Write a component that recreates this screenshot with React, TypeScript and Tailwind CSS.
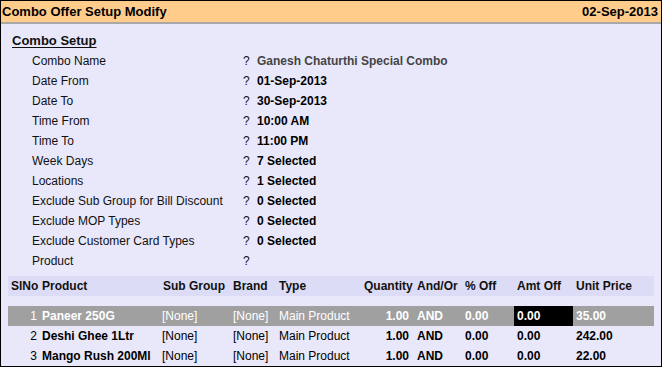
const fields: { label: string; value: string; muted?: boolean }[] = [
  { label: 'Combo Name', value: 'Ganesh Chaturthi Special Combo', muted: true },
  { label: 'Date From', value: '01-Sep-2013' },
  { label: 'Date To', value: '30-Sep-2013' },
  { label: 'Time From', value: '10:00 AM' },
  { label: 'Time To', value: '11:00 PM' },
  { label: 'Week Days', value: '7 Selected' },
  { label: 'Locations', value: '1 Selected' },
  { label: 'Exclude Sub Group for Bill Discount', value: '0 Selected' },
  { label: 'Exclude MOP Types', value: '0 Selected' },
  { label: 'Exclude Customer Card Types', value: '0 Selected' },
  { label: 'Product', value: '' },
]

const items = [
  { no: 1, product: 'Paneer 250G', price: '35.00' },
  { no: 2, product: 'Deshi Ghee 1Ltr', price: '242.00' },
  { no: 3, product: 'Mango Rush 200Ml', price: '22.00' },
]

const cols = 'grid grid-cols-[32px_120px_71px_46px_83px_52px_51px_51px_59px_83px]'

export default function App() {
  return (
    <div className="w-[662px] h-[367px] overflow-hidden border border-black bg-[#e8e8fa] text-[12px] text-[#111] font-['Liberation_Sans',Arial,sans-serif]">
      <div className="flex h-[23px] items-center justify-between border-b-2 border-[#a8a8a8] bg-[#ffcc8c] pl-[1px] pr-[3px] text-[13px] font-bold text-black">
        <span>Combo Offer Setup Modify</span>
        <span>02-Sep-2013</span>
      </div>

      <div className="pt-[7px]">
        <div className="flex h-[20px] items-center pl-[11px] text-[13px] font-bold underline underline-offset-2">
          Combo Setup
        </div>
        {fields.map((f) => (
          <div key={f.label} className="flex h-[20px] items-center whitespace-nowrap">
            <span className="w-[242px] shrink-0 pl-[31px]">{f.label}</span>
            <span className="w-[14px] shrink-0">?</span>
            <span className={f.muted ? 'font-bold text-[#444]' : 'font-bold text-black'}>{f.value}</span>
          </div>
        ))}

        <div className="mt-[5px] px-[7px]">
          <div className={`${cols} h-[20px] items-center bg-[#dcdcf6] font-bold whitespace-nowrap`}>
            <span className="pl-[3px]">SlNo</span>
            <span className="pl-[2px]">Product</span>
            <span className="pl-[3px]">Sub Group</span>
            <span className="pl-[2px]">Brand</span>
            <span className="pl-[2px]">Type</span>
            <span className="pl-[4px]">Quantity</span>
            <span className="pl-[5px]">And/Or</span>
            <span className="pl-[2px]">% Off</span>
            <span className="pl-[3px]">Amt Off</span>
            <span className="pl-[3px]">Unit Price</span>
          </div>

          <div className="mt-[10px]">
            {items.map((r, i) => {
              const sel = i === 0
              return (
                <div
                  key={r.no}
                  className={`${cols} h-[20px] items-center whitespace-nowrap ${sel ? 'bg-[#a0a0a0] text-white' : 'text-black'}`}
                >
                  <span className="pr-[3px] text-right">{r.no}</span>
                  <span className="pl-[2px] font-bold">{r.product}</span>
                  <span className="pl-[2px]">[None]</span>
                  <span className="pl-[2px]">[None]</span>
                  <span className="pl-[2px]">Main Product</span>
                  <span className="pr-[3px] text-right font-bold">1.00</span>
                  <span className="pl-[5px] font-bold">AND</span>
                  <span className="pl-[2px] font-bold">0.00</span>
                  <span className={`flex h-full items-center pl-[3px] font-bold ${sel ? 'bg-black' : ''}`}>0.00</span>
                  <span className="pl-[3px] font-bold">{r.price}</span>
                </div>
              )
            })}
          </div>
        </div>
      </div>
    </div>
  )
}
